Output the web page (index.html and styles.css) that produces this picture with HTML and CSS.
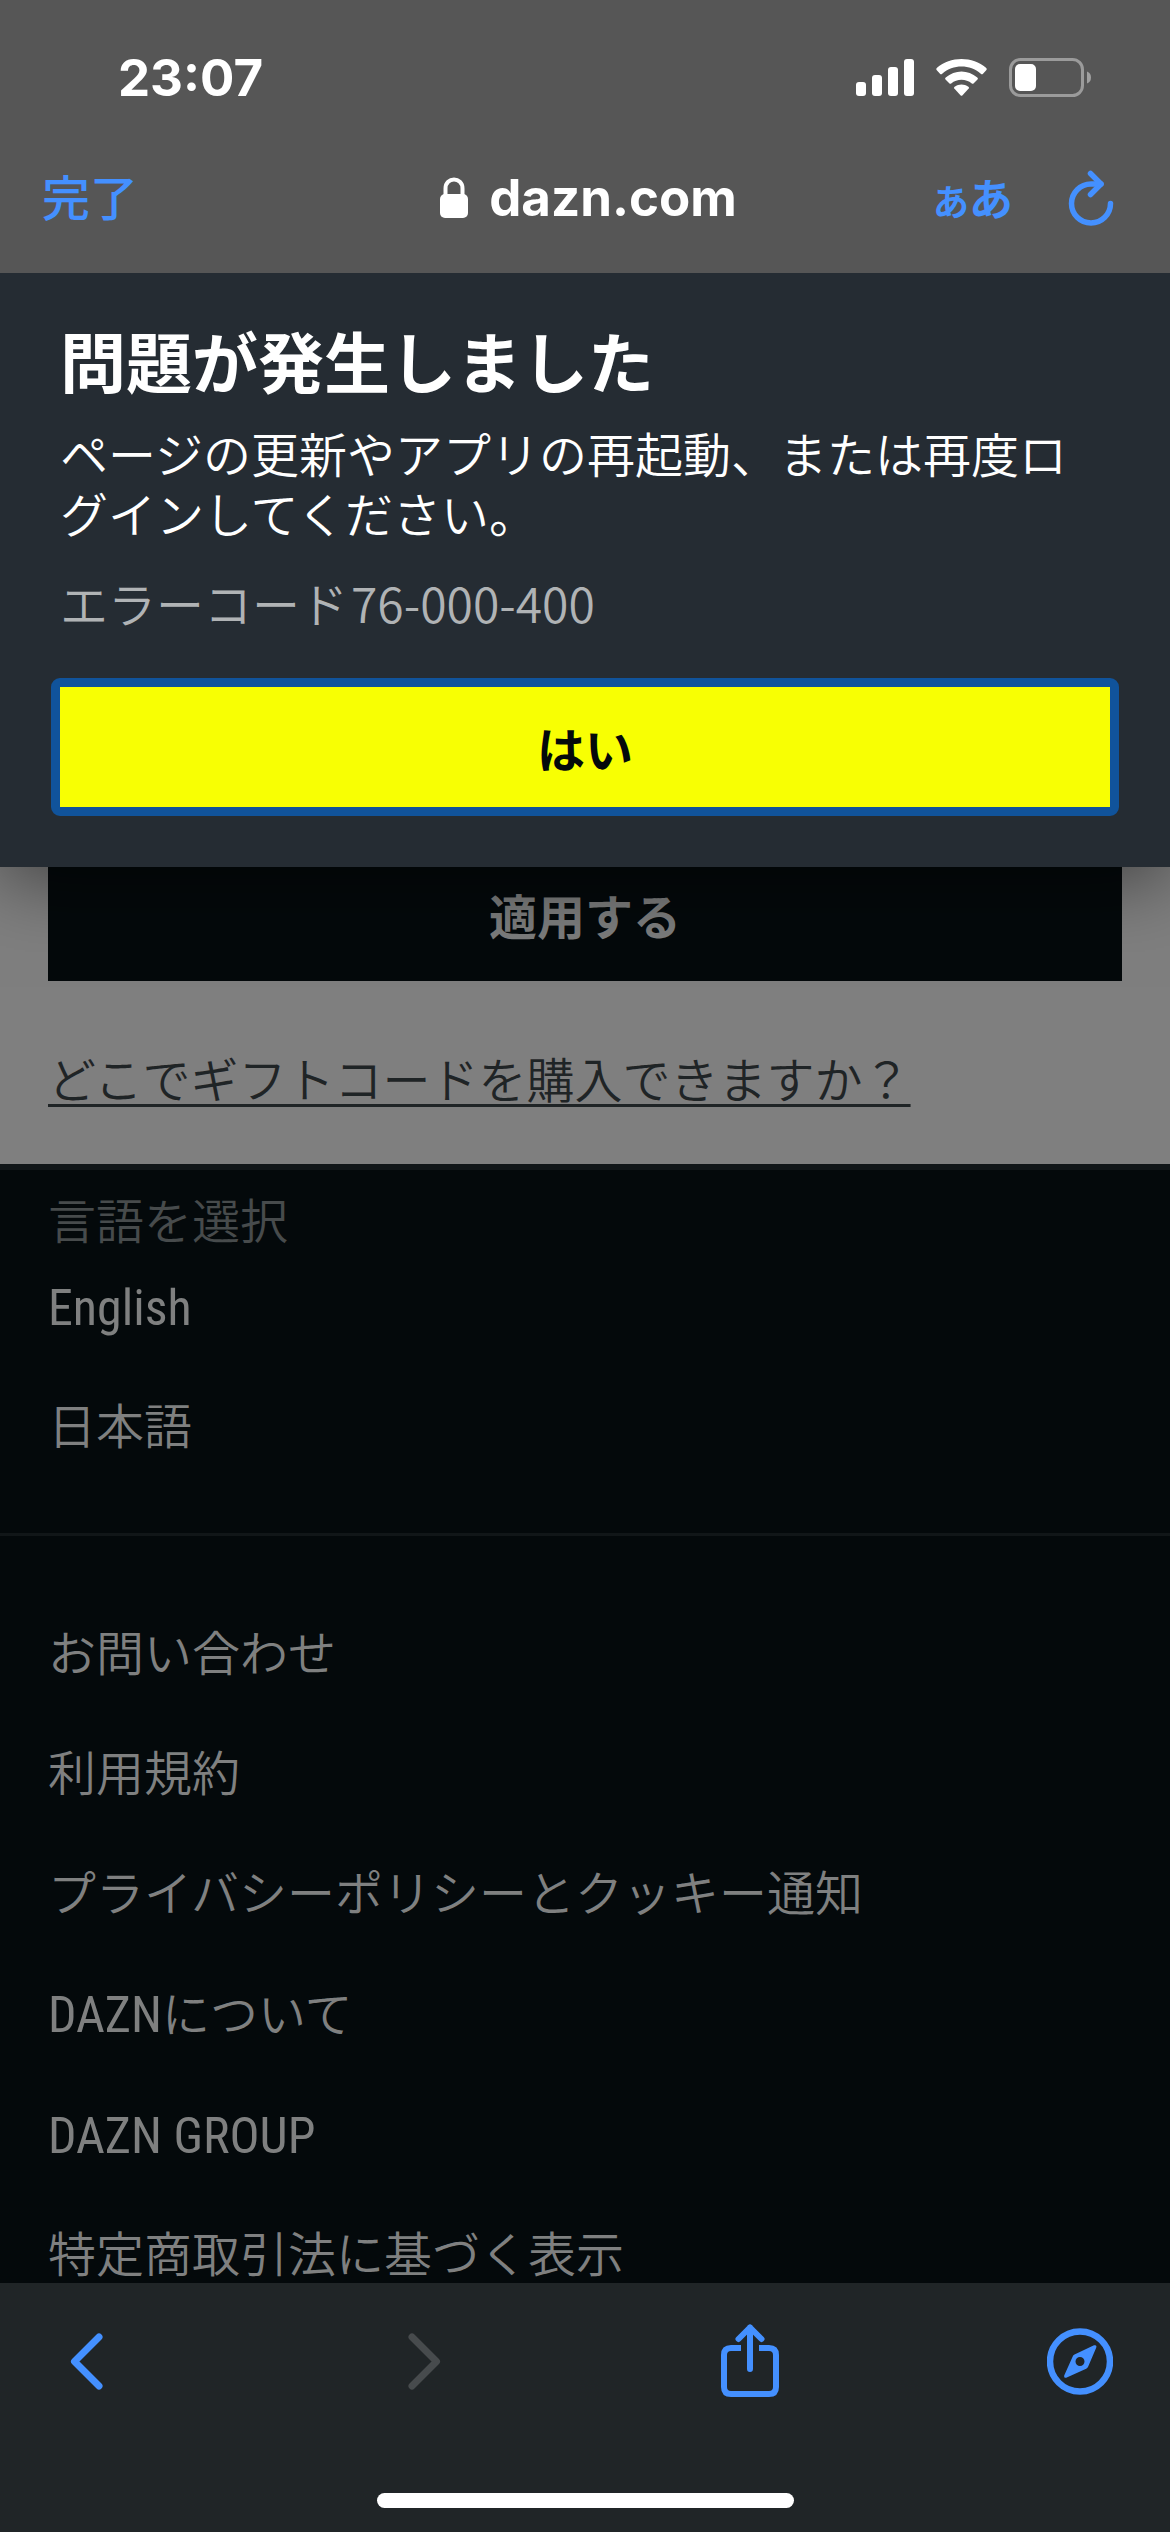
FILE: index.html
```html
<!DOCTYPE html>
<html lang="ja">
<head>
<meta charset="utf-8">
<meta name="viewport" content="width=device-width">
<title>dazn.com</title>
<link rel="stylesheet" href="styles.css">
</head>
<body>
<header class="chrome">
  <div class="status">
    <span class="time">23:07</span>
    <svg class="status-icons" width="236" height="40" viewBox="0 0 236 40" fill="#fff" aria-hidden="true">
      <rect x="0" y="24" width="10" height="14" rx="3"/>
      <rect x="16" y="17" width="10" height="21" rx="3"/>
      <rect x="32" y="9" width="10" height="29" rx="3"/>
      <rect x="48" y="1" width="10" height="37" rx="3"/>
      <path d="M81 12.500Q79.500 11 81 9.700C94-2 117-2 130 9.700Q131.500 11 130 12.500L127 15.700Q126 16.700 124.800 15.700C114 6 97 6 86.200 15.700Q85 16.700 84 15.700Z"/>
      <path d="M89.500 21.500Q88.500 20.500 89.700 19.500C99 11.500 112 11.500 121.300 19.500Q122.500 20.500 121.500 21.500L117.500 25.500Q116.800 26.200 115.800 25.400C110 20.500 101 20.500 95.200 25.400Q94.200 26.200 93.500 25.500Z"/>
      <path d="M98.300 30.400Q97.500 29.500 98.600 28.700C103 25.800 108 25.800 112.400 28.700Q113.500 29.500 112.700 30.400L106.300 37.400Q105.500 38.200 104.700 37.400Z"/>
      <rect x="154.500" y="1.500" width="72" height="36" rx="10" fill="none" stroke="#9b9b9b" stroke-width="3"/>
      <rect x="159" y="6" width="21" height="27" rx="5"/>
      <path d="M231 13.500Q235 15 235 19.500T231 25.500Z" fill="#a0a0a0"/>
    </svg>
  </div>
  <nav class="navbar">
    <button class="done" type="button">完了</button>
    <div class="site">
      <svg width="30" height="42" viewBox="0 0 30 42" aria-hidden="true">
        <path d="M6.500 19V11.500C6.500-.500 23.500-.500 23.500 11.500V19" fill="none" stroke="#fff" stroke-width="4"/>
        <rect x="1" y="17" width="28" height="24" rx="5" fill="#fff"/>
      </svg>
      <span>dazn.com</span>
    </div>
    <div class="nav-actions">
      <button class="reader" type="button" aria-label="表示オプション"><span class="reader-small">あ</span><span>あ</span></button>
      <button type="button" aria-label="再読み込み">
        <svg width="48" height="58" viewBox="0 0 48 58" fill="none" stroke="#4490ff" stroke-width="5.500" stroke-linecap="round" stroke-linejoin="round">
          <path d="M34 15H24A19.500 19.500 0 1 0 43.500 34.500"/>
          <path d="M23.500 4.500 34 15 23.500 25.500" />
        </svg>
      </button>
    </div>
  </nav>
</header>

<main class="page">
  <section class="dialog" role="alertdialog" aria-labelledby="dlg-title">
    <h1 id="dlg-title">問題が発生しました</h1>
    <p class="message">ページの更新やアプリの再起動、または再度ログインしてください。</p>
    <p class="code"><span>エラーコード</span> <span>76-000-400</span></p>
    <button class="confirm" type="button">はい</button>
  </section>
  <section class="gift">
    <button class="apply" type="button">適用する</button>
    <a href="#gift">どこでギフトコードを購入できますか？</a>
  </section>
  <footer class="footer">
    <div class="languages">
      <h2>言語を選択</h2>
      <ul>
        <li><a class="latin" href="#en" lang="en">English</a></li>
        <li><a href="#ja">日本語</a></li>
      </ul>
    </div>
    <ul class="links">
      <li><a href="#contact">お問い合わせ</a></li>
      <li><a href="#terms">利用規約</a></li>
      <li><a href="#privacy">プライバシーポリシーとクッキー通知</a></li>
      <li><a href="#about"><span class="latin">DAZN</span>について</a></li>
      <li><a class="latin" href="#group">DAZN GROUP</a></li>
      <li><a href="#law">特定商取引法に基づく表示</a></li>
    </ul>
  </footer>
</main>

<div class="toolbar">
  <div class="tools">
    <button type="button" aria-label="戻る">
      <svg width="66" height="76" viewBox="0 0 66 76" fill="none" stroke="#4490ff" stroke-width="7" stroke-linecap="round" stroke-linejoin="round"><path d="M45 14 20.500 38.500 45 63"/></svg>
    </button>
    <button type="button" aria-label="進む" disabled>
      <svg width="66" height="76" viewBox="0 0 66 76" fill="none" stroke="#474b4d" stroke-width="7" stroke-linecap="round" stroke-linejoin="round"><path d="M27 14 51.500 38.500 27 63"/></svg>
    </button>
    <button type="button" aria-label="共有">
      <svg width="66" height="76" viewBox="0 0 66 76" fill="none" stroke="#4490ff" stroke-width="6" stroke-linecap="round" stroke-linejoin="round">
        <path d="M34 4.500V46M22.500 16 34 4.500 45.500 16"/>
        <path stroke-linecap="butt" d="M25 25H15Q8 25 8 32V64Q8 71 15 71H53Q60 71 60 64V32Q60 25 53 25H43"/>
      </svg>
    </button>
    <button type="button" aria-label="Safariで開く">
      <svg width="66" height="76" viewBox="0 0 66 76">
        <circle cx="33" cy="38.500" r="30" fill="none" stroke="#4490ff" stroke-width="6.500"/>
        <path fill="#4490ff" fill-rule="evenodd" d="M47 22.300Q50.200 21.500 49.200 24.700L41.200 43.500Q40.700 45 39.200 45.700L19.200 54.700Q16.500 55.500 17.200 52.500L25.700 33.500Q26.200 32.200 27.500 31.500ZM33 34A4.500 4.500 0 1 0 33 43A4.500 4.500 0 1 0 33 34Z"/>
      </svg>
    </button>
  </div>
  <div class="home"></div>
</div>
</body>
</html>
```
FILE: styles.css
```css
* { box-sizing: border-box; }

body {
  margin: 0;
  height: 100vh;
  display: flex;
  flex-direction: column;
  overflow: hidden;
  background: #04090b;
  color: #fff;
  font-family: "Roboto Condensed", "Liberation Sans Narrow", "Noto Sans CJK JP", sans-serif;
  font-size: 48px;
  font-weight: 350;
  line-height: 60px;
}

h1, h2, p, ul { margin: 0; padding: 0; }
ul { list-style: none; }
a { color: inherit; }

button {
  padding: 0;
  border: 0;
  background: none;
  color: inherit;
  font: inherit;
}

svg { display: block; }

.latin { font-size: 50px; font-weight: 400; }

/* Browser top bar */
.chrome {
  flex: none;
  background: #565656;
  font-family: Inter, "Noto Sans CJK JP", sans-serif;
}

.status {
  display: flex;
  justify-content: space-between;
  align-items: center;
  padding: 48px 78px 0 118px;
}

.time { font-size: 51px; font-weight: 700; }

.navbar {
  display: grid;
  grid-template-columns: 1fr auto 1fr;
  align-items: center;
  height: 165px;
  padding: 15px 42px 0;
}

.done {
  justify-self: start;
  padding-top: 2px;
  color: #4490ff;
  font-weight: 500;
}

.site {
  display: flex;
  align-items: center;
  gap: 20px;
  padding-left: 6px;
  font-size: 51px;
  font-weight: 700;
}

.nav-actions {
  display: flex;
  justify-content: flex-end;
  align-items: center;
  gap: 54px;
  padding-right: 13px;
  color: #4490ff;
}

.reader {
  display: flex;
  align-items: baseline;
  padding-top: 6px;
  font-size: 44px;
  font-weight: 700;
}

.reader-small { font-size: 36px; }

/* Page content */
.page {
  flex: 1;
  min-height: 0;
  overflow: hidden;
}

.dialog {
  position: relative;
  z-index: 1;
  padding: 46px 60px 51px;
  background: #252c33;
  box-shadow: 0 12px 72px rgba(0, 0, 0, .5);
  font-family: "Noto Sans CJK JP", sans-serif;
}

.dialog h1 {
  font-size: 66px;
  font-weight: 700;
  line-height: 80px;
}

.message { margin-top: 23px; }

.code {
  display: flex;
  gap: 3px;
  margin-top: 30px;
  color: #b0b3b5;
}

.confirm {
  display: block;
  width: calc(100% + 18px);
  height: 138px;
  margin: 46px -9px 0;
  border: 9px solid #10539b;
  border-radius: 9px;
  background: #f8ff03;
  color: #04090b;
  font-weight: 700;
}

.gift {
  padding: 0 48px 52px;
  background: #7f7f7f;
  color: #1f2426;
}

.apply {
  display: block;
  width: 100%;
  height: 126px;
  margin: -12px 0 71px;
  padding-top: 2px;
  background: #04090b;
  color: #7c7d7d;
  font-weight: 700;
}

.gift a {
  display: block;
  width: fit-content;
  text-decoration-thickness: 3px;
  text-underline-offset: 6px;
  text-decoration-skip-ink: none;
}

.footer {
  border-top: 6px solid #111618;
  color: #7f8080;
}

.footer a {
  display: block;
  width: fit-content;
  padding: 30px 0;
  text-decoration: none;
}

.languages {
  padding: 23px 48px 45px;
  border-bottom: 3px solid #111618;
}

.languages h2 {
  color: #474b4c;
  font-size: 48px;
  font-weight: 350;
  margin-bottom: -5px;
}

.links { padding: 59px 48px; }

/* Browser bottom bar */
.toolbar {
  flex: none;
  background: #202527;
}

.tools {
  display: flex;
  justify-content: space-between;
  padding: 40px 57px 94px 54px;
}

.home {
  width: 417px;
  height: 15px;
  margin: 0 auto 24px;
  border-radius: 8px;
  background: #fff;
}
```
